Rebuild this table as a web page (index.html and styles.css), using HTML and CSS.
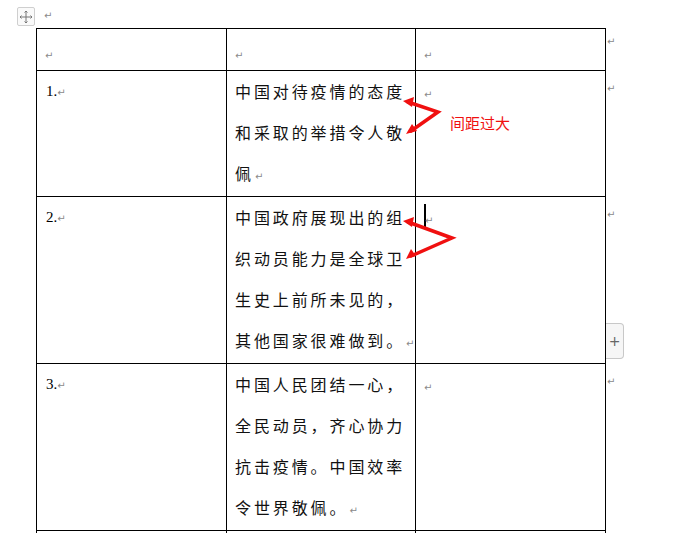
FILE: index.html
```html
<!DOCTYPE html>
<html lang="zh-CN">
<head>
<meta charset="utf-8">
<title>文档表格</title>
<link rel="stylesheet" href="styles.css">
</head>
<body>
<div class="page">
  <div class="move-handle" title="移动表格">
    <svg width="14" height="14" viewBox="0 0 14 14" fill="none" stroke="#777" stroke-width="1">
      <path d="M7 1v12M1 7h12"/>
      <path d="M5.5 2.5L7 1l1.5 1.5M5.5 11.5L7 13l1.5-1.5M2.5 5.5L1 7l1.5 1.5M11.5 5.5L13 7l-1.5 1.5"/>
    </svg>
  </div>
  <p class="para first"><span class="ret">↵</span></p>
  <table class="doc-table">
    <colgroup>
      <col class="c1"><col class="c2"><col class="c3"><col class="c4">
    </colgroup>
    <tr class="r-head">
      <td><span class="ret">↵</span></td>
      <td><span class="ret">↵</span></td>
      <td><span class="ret">↵</span></td>
      <td class="row-end"><span class="ret">↵</span></td>
    </tr>
    <tr class="r-body r2">
      <td class="num">1.<span class="ret">↵</span></td>
      <td class="cjk">中国对待疫情的态度和采取的举措令人敬佩<span class="ret">↵</span></td>
      <td class="side"><span class="ret">↵</span></td>
      <td class="row-end"><span class="ret">↵</span></td>
    </tr>
    <tr class="r-body r3">
      <td class="num">2.<span class="ret">↵</span></td>
      <td class="cjk">中国政府展现出的组织动员能力是全球卫生史上前所未见的，其他国家很难做到。<span class="ret">↵</span></td>
      <td class="side"><span class="caret"></span><span class="ret">↵</span></td>
      <td class="row-end"><span class="ret">↵</span></td>
    </tr>
    <tr class="r-body r4">
      <td class="num">3.<span class="ret">↵</span></td>
      <td class="cjk">中国人民团结一心，全民动员，齐心协力抗击疫情。中国效率令世界敬佩。<span class="ret">↵</span></td>
      <td class="side"><span class="ret">↵</span></td>
      <td class="row-end"><span class="ret">↵</span></td>
    </tr>
    <tr class="r-tail">
      <td></td><td></td><td></td><td class="row-end"></td>
    </tr>
  </table>

  <button class="add-col" type="button">+</button>

  <svg class="annot" width="676" height="533" viewBox="0 0 676 533">
    <g stroke="#f01010" stroke-width="3.5" fill="none" stroke-linejoin="miter" stroke-linecap="round">
      <polyline points="408,102 438,112 411,131"/>
      <polyline points="408,222 452,238 411,256"/>
    </g>
    <g fill="#f01010">
      <polygon points="403,101 414,97 412,107"/>
      <polygon points="406,134 412,124 417,131"/>
      <polygon points="403,221 414,217 412,227"/>
      <polygon points="406,259 411,249 416,256"/>
    </g>
  </svg>
  <div class="note">间距过大</div>
</div>
</body>
</html>
```
FILE: styles.css
```css
html, body {
  margin: 0;
  padding: 0;
  background: #ffffff;
}

.page {
  position: relative;
  width: 676px;
  height: 533px;
  overflow: hidden;
  padding: 0 0 0 36px;
  box-sizing: border-box;
  font-family: "Noto Sans CJK SC", "Liberation Sans", sans-serif;
}

.para {
  margin: 0;
  height: 28px;
  padding: 4px 0 0 8px;
  box-sizing: border-box;
  line-height: 16px;
}

.ret {
  font-family: "DejaVu Sans", sans-serif;
  font-size: 10px;
  color: #8a8a8a;
  letter-spacing: 0;
  line-height: 1;
  vertical-align: baseline;
}

.move-handle {
  position: absolute;
  left: 17px;
  top: 7px;
  width: 18px;
  height: 19px;
  border: 1px solid #cfcfcf;
  border-radius: 2px;
  box-sizing: border-box;
  display: flex;
  align-items: center;
  justify-content: center;
  background: #fafafa;
}

.doc-table {
  border-collapse: collapse;
  table-layout: fixed;
  width: 600px;
}

.c1 { width: 190px; }
.c2 { width: 189px; }
.c3 { width: 190px; }
.c4 { width: 31px; }

.doc-table td {
  border: 1px solid #000;
  vertical-align: top;
  padding: 0 6px 0 8px;
  box-sizing: border-box;
}

.doc-table td.row-end {
  border: none;
  padding: 1px 0 0 1px;
}

.r-head td {
  height: 42px;
  padding-top: 15px;
  line-height: 16px;
}

.r-head td.row-end { padding-top: 1px; }

.r-body td { padding-top: 0; }

.r2 td { height: 126px; }
.r3 td { height: 167px; }
.r4 td { height: 167px; }

.r2 td.row-end, .r3 td.row-end, .r4 td.row-end { padding-top: 2px; }

.num {
  font-family: "Liberation Serif", serif;
  font-size: 15px;
  line-height: 41px;
  color: #000;
  padding-left: 9px !important;
}

.cjk {
  font-family: "Noto Sans CJK SC", sans-serif;
  font-size: 16px;
  letter-spacing: 2.9px;
  line-height: 41px;
  color: #111;
  padding-left: 8px !important;
  padding-right: 2px !important;
}

.cjk .ret {
  display: inline-block;
  width: 10px;
  margin-left: 1px;
  margin-right: -11px;
}

.side {
  line-height: 41px;
}

.caret {
  display: inline-block;
  width: 2px;
  height: 24px;
  background: #000;
  vertical-align: -4px;
  margin-right: -1px;
}

.r-tail td {
  height: 4px;
  border-bottom: none;
}

.add-col {
  position: absolute;
  left: 606px;
  top: 323px;
  width: 18px;
  height: 36px;
  padding: 0;
  border: 1px solid #c8c8c8;
  border-left: none;
  border-radius: 0 4px 4px 0;
  background: #f6f6f6;
  color: #666;
  font-family: "DejaVu Sans", sans-serif;
  font-size: 14px;
  line-height: 34px;
}

.annot {
  position: absolute;
  left: 0;
  top: 0;
  pointer-events: none;
}

.note {
  position: absolute;
  left: 450px;
  top: 113px;
  font-family: "Noto Sans CJK SC", sans-serif;
  font-size: 15px;
  line-height: 20px;
  color: #f01010;
}
```
